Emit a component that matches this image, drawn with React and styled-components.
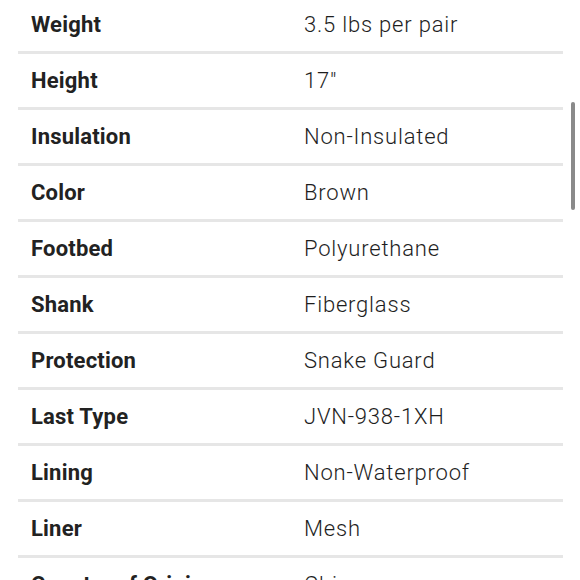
import styled, { createGlobalStyle } from "styled-components";

const Global = createGlobalStyle`
  html, body {
    margin: 0;
    padding: 0;
    background: #fff;
    overflow: hidden;
  }
  body {
    font-family: Roboto, "Liberation Sans", sans-serif;
  }
`;

const Page = styled.div`
  position: relative;
  width: 580px;
  height: 580px;
  overflow: hidden;
`;

const SpecList = styled.dl`
  margin: -2px 0 0 18px;
  width: 545px;
  padding: 0;
`;

const Row = styled.div`
  display: grid;
  grid-template-columns: 273px 1fr;
  align-items: center;
  height: 53px;
  border-bottom: 3px solid #e6e6e6;
  padding-left: 13px;
`;

const Label = styled.dt`
  margin: 0;
  font-size: 22px;
  font-weight: 700;
  color: #222;
  letter-spacing: 0.2px;
`;

const Value = styled.dd`
  margin: 0;
  font-size: 22px;
  font-weight: 300;
  color: #1e1e1e;
  letter-spacing: 0.8px;
`;

const Scrollbar = styled.div`
  position: absolute;
  right: 5px;
  top: 102px;
  width: 4px;
  height: 108px;
  border-radius: 2px;
  background: #8a8a8a;
`;

const specs = [
  ["Weight", "3.5 lbs per pair"],
  ["Height", '17"'],
  ["Insulation", "Non-Insulated"],
  ["Color", "Brown"],
  ["Footbed", "Polyurethane"],
  ["Shank", "Fiberglass"],
  ["Protection", "Snake Guard"],
  ["Last Type", "JVN-938-1XH"],
  ["Lining", "Non-Waterproof"],
  ["Liner", "Mesh"],
  ["Country of Origin", "China"],
];

export default function App() {
  return (
    <Page>
      <Global />
      <SpecList>
        {specs.map(([k, v]) => (
          <Row key={k}>
            <Label>{k}</Label>
            <Value>{v}</Value>
          </Row>
        ))}
      </SpecList>
      <Scrollbar />
    </Page>
  );
}
